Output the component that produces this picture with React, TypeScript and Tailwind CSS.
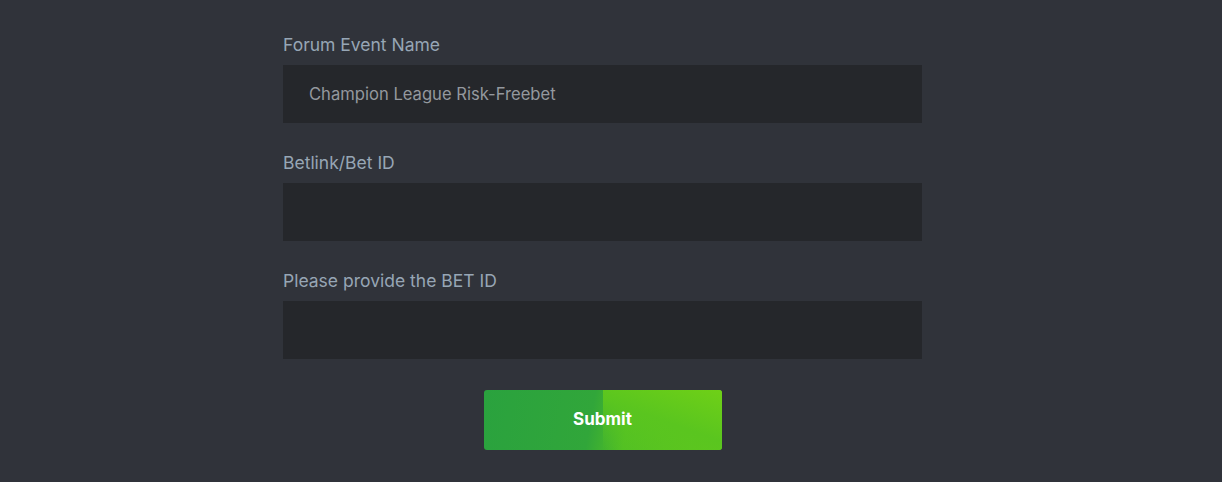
import React from 'react';

const fields = [
  { label: 'Forum Event Name', value: 'Champion League Risk-Freebet' },
  { label: 'Betlink/Bet ID', value: '' },
  { label: 'Please provide the BET ID', value: '' },
];

const App = () => {
  return (
    <div className="min-h-screen bg-[#30333a] font-['Inter',sans-serif] pr-[17px]">
      <form className="w-[639px] mx-auto pt-[33px] flex flex-col" onSubmit={(e) => e.preventDefault()}>
        {fields.map((field) => (
          <div key={field.label} className="flex flex-col mb-[28px]">
            <label className="text-[17.5px] leading-6 text-[#97a6b5] mb-[8px]">{field.label}</label>
            <input
              type="text"
              defaultValue={field.value}
              className="h-[58px] w-full bg-[#25272b] px-[26px] text-[16.6px] text-[#94989e] outline-none"
            />
          </div>
        ))}
        <div className="flex justify-center mt-[3px]">
          <button
            type="submit"
            className="w-[238px] h-[60px] rounded-[3px] text-[17px] font-bold text-white bg-[linear-gradient(100deg,#2aa23e_0%,#31a63a_45%,#52c024_60%,#62c81d_100%)] relative overflow-hidden"
          >
            <span className="absolute inset-y-0 left-1/2 right-0 bg-[linear-gradient(200deg,#6fd017_0%,#5ac51f_50%,rgba(90,197,31,0)_100%)]" />
            <span className="relative">Submit</span>
          </button>
        </div>
      </form>
    </div>
  );
};

export default App;
